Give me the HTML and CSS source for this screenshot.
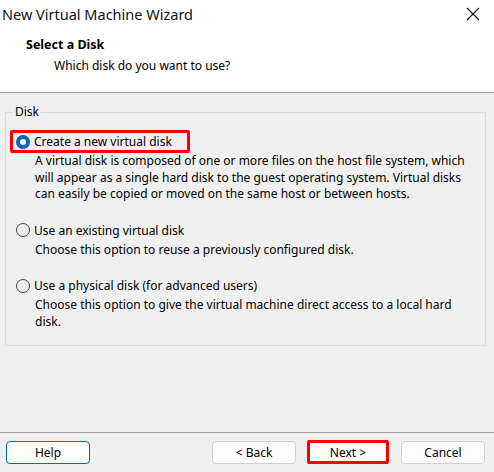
FILE: index.html
```html
<!DOCTYPE html>
<html lang="en">
<head>
    <meta charset="UTF-8">
    <title>New Virtual Machine Wizard</title>
    <link rel="stylesheet" href="styles.css">
</head>
<body>
    <div class="wizard">
        <!-- Title bar and page heading -->
        <div class="header">
            <div class="titlebar">
                <span class="title">New Virtual Machine Wizard</span>
                <svg class="close" width="14" height="14" viewBox="0 0 14 14">
                    <path d="M1 1 L13 13 M13 1 L1 13" stroke="#111" stroke-width="1.1" fill="none"/>
                </svg>
            </div>
            <div class="heading">Select a Disk</div>
            <div class="subheading">Which disk do you want to use?</div>
        </div>

        <div class="body">
            <fieldset class="group">
                <legend>Disk</legend>

                <div class="option">
                    <div class="option-row highlight">
                        <span class="radio checked"></span>
                        <span>Create a new virtual disk</span>
                    </div>
                    <p class="desc">A virtual disk is composed of one or more files on the host file system, which will appear as a single hard disk to the guest operating system. Virtual disks can easily be copied or moved on the same host or between hosts.</p>
                </div>

                <div class="option">
                    <div class="option-row">
                        <span class="radio"></span>
                        <span>Use an existing virtual disk</span>
                    </div>
                    <p class="desc">Choose this option to reuse a previously configured disk.</p>
                </div>

                <div class="option">
                    <div class="option-row">
                        <span class="radio"></span>
                        <span>Use a physical disk (for advanced users)</span>
                    </div>
                    <p class="desc">Choose this option to give the virtual machine direct access to a local hard disk.</p>
                </div>
            </fieldset>
        </div>

        <!-- Bottom button bar -->
        <div class="footer">
            <button class="btn focused">Help</button>
            <div class="spacer"></div>
            <button class="btn">&lt; Back</button>
            <button class="btn highlight-btn">Next &gt;</button>
            <button class="btn cancel">Cancel</button>
        </div>
    </div>
</body>
</html>
```

FILE: styles.css
```css
body {
    margin: 0;
    background-color: #f0f0f0;
    font-family: "Noto Sans", "Open Sans", sans-serif;
    font-size: 12px;
    color: #000;
}

.wizard {
    display: flex;
    flex-direction: column;
    height: 472px;
}

/* White top area */
.header {
    background-color: #fff;
    height: 92px;
    border-bottom: 1px solid #a0a0a0;
}

.titlebar {
    display: flex;
    align-items: center;
    justify-content: space-between;
    height: 27px;
    padding: 0 14px 0 2px;
}

.title {
    font-size: 14.5px;
    color: #111;
}

.heading {
    font-weight: bold;
    font-size: 12.5px;
    padding-left: 26px;
    margin-top: 9px;
    line-height: 18px;
}

.subheading {
    padding-left: 54px;
    margin-top: 3px;
    line-height: 18px;
}

.body {
    flex: 1;
    padding: 11px 8px 0 5px;
}

/* Group box */
.group {
    margin: 0;
    padding: 10px 10px 15px 4px;
    border: 1px solid #dcdcdc;
    border-radius: 0;
}

.group legend {
    padding: 0 2px;
    margin-left: 3px;
    line-height: 16px;
}

.option + .option {
    margin-top: 16px;
}

.option-row {
    display: inline-flex;
    align-items: center;
    gap: 4px;
    height: 23px;
    padding: 0 8px 0 3px;
    box-sizing: border-box;
    border: 3px solid transparent;
    border-radius: 2px;
}

.option-row.highlight {
    border-color: #f00;
    width: 180px;
}

.radio {
    width: 12px;
    height: 12px;
    border: 1px solid #444;
    border-radius: 50%;
    background-color: transparent;
    box-sizing: content-box;
}

.radio.checked {
    width: 6px;
    height: 6px;
    border: 4px solid #0067c0;
    background-color: #fff;
}

.desc {
    margin: 0;
    padding-left: 25px;
    line-height: 16.5px;
}

/* Buttons */
.footer {
    display: flex;
    align-items: center;
    gap: 11px;
    height: 38px;
    border-top: 1px solid #a0a0a0;
    padding: 0 9px 1px 6px;
}

.spacer {
    flex: 1;
}

.btn {
    width: 84px;
    height: 23px;
    font-family: inherit;
    font-size: 12px;
    background-color: #fdfdfd;
    border: 1px solid #d0d0d0;
    border-radius: 4px;
    color: #000;
}

.btn.focused {
    border-color: #0067c0;
}

.btn.highlight-btn {
    border: 3px solid #f00;
    border-radius: 2px;
    width: 82px;
    height: 24px;
}

.btn.cancel {
    margin-left: 1px;
}
```
